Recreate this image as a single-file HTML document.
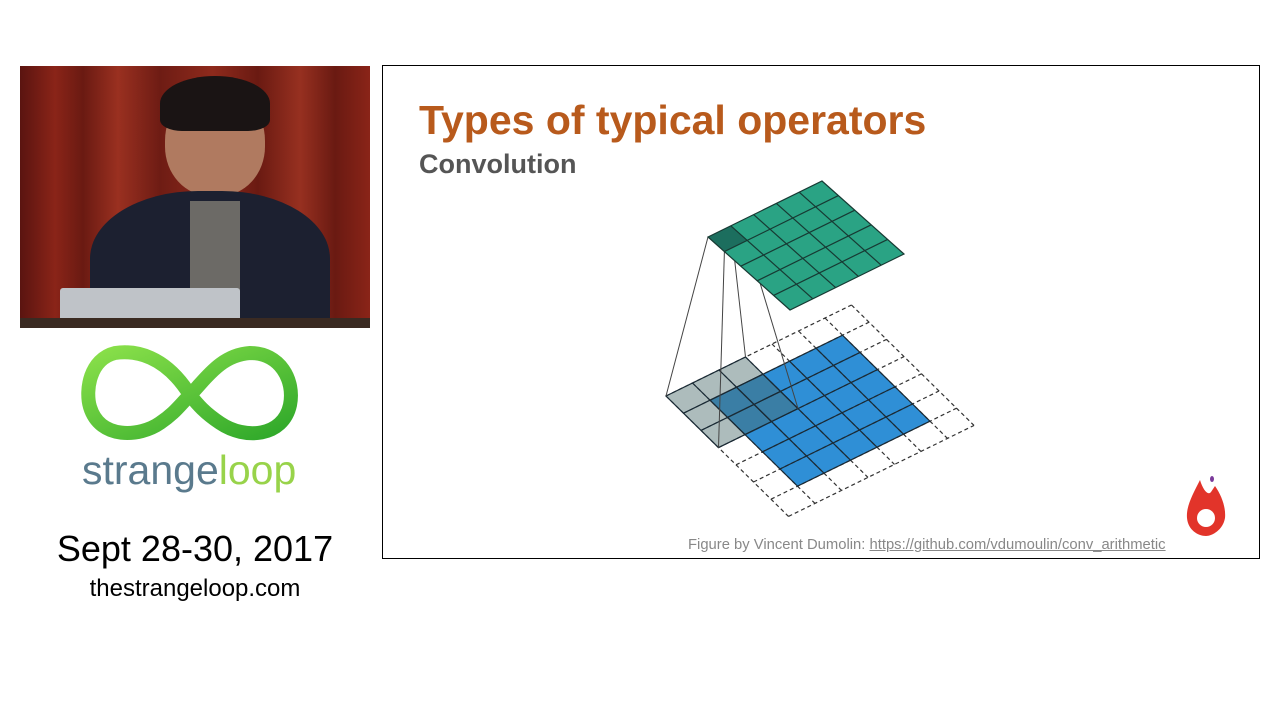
<!DOCTYPE html>
<html><head><meta charset="utf-8"><style>
html,body{margin:0;padding:0;background:#fff;width:1280px;height:720px;overflow:hidden;font-family:"Liberation Sans",sans-serif}
.abs{position:absolute}
</style></head><body>
<div class="abs" style="left:20px;top:66px;width:350px;height:262px;overflow:hidden;background:linear-gradient(90deg,#5a1410 0%,#8a2418 10%,#6a1a12 18%,#9a3020 28%,#6e1c14 40%,#8e2a1c 55%,#6a1a12 68%,#973020 80%,#6a1a12 90%,#8a2418 100%)">
  <div class="abs" style="left:145px;top:20px;width:100px;height:110px;border-radius:50% 50% 45% 45%;background:#b07a60"></div>
  <div class="abs" style="left:140px;top:10px;width:110px;height:55px;border-radius:50% 50% 20% 20%;background:#1a1414"></div>
  <div class="abs" style="left:70px;top:125px;width:240px;height:150px;border-radius:45% 45% 0 0;background:#1c2030"></div>
  <div class="abs" style="left:170px;top:135px;width:50px;height:90px;background:#6c6a66"></div>
  <div class="abs" style="left:40px;top:222px;width:180px;height:36px;background:#bfc3c8;border-radius:3px"></div>
  <div class="abs" style="left:0;top:252px;width:350px;height:10px;background:#3a2a22"></div>
</div>
<svg class="abs" style="left:80px;top:345px" width="220" height="100" viewBox="0 0 220 100">
  <defs><linearGradient id="g" x1="0" y1="0" x2="1" y2="1"><stop offset="0" stop-color="#8ae04a"/><stop offset="1" stop-color="#2fa82a"/></linearGradient></defs>
  <path d="M110 50 C85 10 55 5 35 8 C10 14 5 45 10 62 C20 95 60 92 80 78 C95 68 100 60 110 50 C125 35 140 10 170 8 C200 8 215 35 210 60 C203 92 165 95 140 78 C125 68 118 60 110 50 Z" fill="none" stroke="url(#g)" stroke-width="14"/>
</svg>
<div class="abs" style="left:82px;top:448px;font-size:41px;line-height:44px"><span style="color:#5a7a8d">strange</span><span style="color:#98d34a">loop</span></div>
<div class="abs" style="left:20px;top:528px;width:350px;text-align:center;font-size:36px;color:#000">Sept 28-30, 2017</div>
<div class="abs" style="left:20px;top:575px;width:350px;text-align:center;font-size:24px;color:#000">thestrangeloop.com</div>

<div class="abs" style="left:382px;top:65px;width:876px;height:492px;border:1.5px solid #000;background:#fff"></div>
<div class="abs" style="left:419px;top:97px;font-size:41px;font-weight:bold;color:#b85a1c">Types of typical operators</div>
<div class="abs" style="left:419px;top:149px;font-size:27px;font-weight:bold;color:#555">Convolution</div>
<div class="abs" style="left:688px;top:537px;font-size:14.8px;color:#888">Figure by Vincent Dumolin: <span style="text-decoration:underline">https://github.com/vdumoulin/conv_arithmetic</span></div>

<svg class="abs" style="left:0;top:0" width="1280" height="720">
  <g transform="matrix(26.5 -13 17.5 17.2 666 396)" fill="none">
    <rect x="1" y="1" width="5" height="5" fill="#2f8fd6"/>
    <path d="M0 0V7M1 0V7M2 0V7M3 0V7M4 0V7M5 0V7M6 0V7M7 0V7M0 0H7M0 1H7M0 2H7M0 3H7M0 4H7M0 5H7M0 6H7M0 7H7" stroke="#333" stroke-width="1.2" stroke-dasharray="4 3" vector-effect="non-scaling-stroke"/>
    <rect x="0" y="0" width="3" height="3" fill="#4a6a6a" fill-opacity="0.45"/>
    <g stroke="#1a2a35" stroke-width="1.2">
      <path d="M2 1V6M3 1V6M4 1V6M5 1V6M1 2H6M1 3H6M1 4H6M1 5H6M1 1H6V6H1Z" vector-effect="non-scaling-stroke"/>
      <path d="M0 0H3V3H0ZM1 0V3M2 0V3M0 1H3M0 2H3" vector-effect="non-scaling-stroke"/>
    </g>
  </g>
  <g stroke="#444" stroke-width="1">
    <line x1="708" y1="237" x2="666" y2="396"/>
    <line x1="724.4" y1="251.6" x2="718.5" y2="447.6"/>
    <line x1="730.8" y1="225.8" x2="745.5" y2="357"/>
    <line x1="747.2" y1="240.4" x2="798" y2="408.6"/>
  </g>
  <g transform="matrix(22.8 -11.2 16.4 14.6 708 237)">
    <rect x="0" y="0" width="5" height="5" fill="#2aa384"/>
    <rect x="0" y="0" width="1" height="1" fill="#1c6e5e"/>
    <path d="M0 0H5V5H0ZM1 0V5M2 0V5M3 0V5M4 0V5M0 1H5M0 2H5M0 3H5M0 4H5" fill="none" stroke="#173a33" stroke-width="1.2" vector-effect="non-scaling-stroke"/>
  </g>
  <path d="M1200 480 C1203 490 1208 496 1211 492 L1215 486 C1222 496 1226 508 1225 518 C1223 530 1212 536 1206 536 C1198 536 1188 530 1187 518 C1186 506 1193 494 1200 480 Z" fill="#e2342a"/>
  <circle cx="1206" cy="518" r="9" fill="#fff"/>
  <ellipse cx="1212" cy="479" rx="2" ry="3" fill="#7a3a9a"/>
</svg>
</body></html>
